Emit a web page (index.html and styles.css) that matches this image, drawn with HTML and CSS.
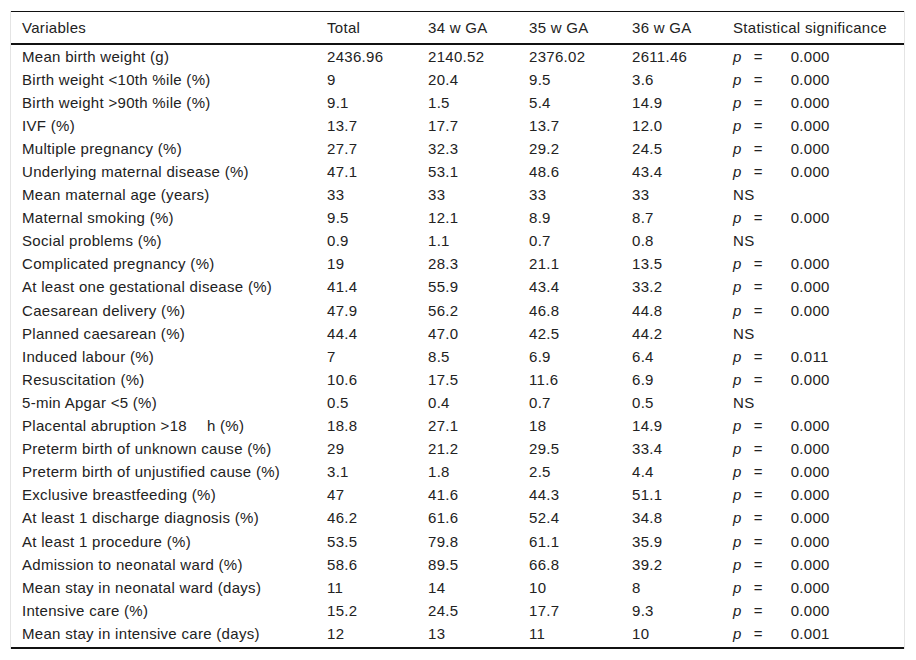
FILE: index.html
```html
<!DOCTYPE html>
<html lang="en">
<head>
<meta charset="utf-8">
<title>Table</title>
<link rel="stylesheet" href="styles.css">
</head>
<body>
<div class="wrap">
<table class="data">
<colgroup>
<col class="c1"><col class="c2"><col class="c3"><col class="c4"><col class="c5"><col class="c6">
</colgroup>
<thead>
<tr><th>Variables</th><th>Total</th><th>34 w GA</th><th>35 w GA</th><th>36 w GA</th><th>Statistical significance</th></tr>
</thead>
<tbody>
<tr><td>Mean birth weight (g)</td><td>2436.96</td><td>2140.52</td><td>2376.02</td><td>2611.46</td><td><i>p</i><span class="eq">=</span>0.000</td></tr>
<tr><td>Birth weight &lt;10th %ile (%)</td><td>9</td><td>20.4</td><td>9.5</td><td>3.6</td><td><i>p</i><span class="eq">=</span>0.000</td></tr>
<tr><td>Birth weight &gt;90th %ile (%)</td><td>9.1</td><td>1.5</td><td>5.4</td><td>14.9</td><td><i>p</i><span class="eq">=</span>0.000</td></tr>
<tr><td>IVF (%)</td><td>13.7</td><td>17.7</td><td>13.7</td><td>12.0</td><td><i>p</i><span class="eq">=</span>0.000</td></tr>
<tr><td>Multiple pregnancy (%)</td><td>27.7</td><td>32.3</td><td>29.2</td><td>24.5</td><td><i>p</i><span class="eq">=</span>0.000</td></tr>
<tr><td>Underlying maternal disease (%)</td><td>47.1</td><td>53.1</td><td>48.6</td><td>43.4</td><td><i>p</i><span class="eq">=</span>0.000</td></tr>
<tr><td>Mean maternal age (years)</td><td>33</td><td>33</td><td>33</td><td>33</td><td>NS</td></tr>
<tr><td>Maternal smoking (%)</td><td>9.5</td><td>12.1</td><td>8.9</td><td>8.7</td><td><i>p</i><span class="eq">=</span>0.000</td></tr>
<tr><td>Social problems (%)</td><td>0.9</td><td>1.1</td><td>0.7</td><td>0.8</td><td>NS</td></tr>
<tr><td>Complicated pregnancy (%)</td><td>19</td><td>28.3</td><td>21.1</td><td>13.5</td><td><i>p</i><span class="eq">=</span>0.000</td></tr>
<tr><td>At least one gestational disease (%)</td><td>41.4</td><td>55.9</td><td>43.4</td><td>33.2</td><td><i>p</i><span class="eq">=</span>0.000</td></tr>
<tr><td>Caesarean delivery (%)</td><td>47.9</td><td>56.2</td><td>46.8</td><td>44.8</td><td><i>p</i><span class="eq">=</span>0.000</td></tr>
<tr><td>Planned caesarean (%)</td><td>44.4</td><td>47.0</td><td>42.5</td><td>44.2</td><td>NS</td></tr>
<tr><td>Induced labour (%)</td><td>7</td><td>8.5</td><td>6.9</td><td>6.4</td><td><i>p</i><span class="eq">=</span>0.011</td></tr>
<tr><td>Resuscitation (%)</td><td>10.6</td><td>17.5</td><td>11.6</td><td>6.9</td><td><i>p</i><span class="eq">=</span>0.000</td></tr>
<tr><td>5-min Apgar &lt;5 (%)</td><td>0.5</td><td>0.4</td><td>0.7</td><td>0.5</td><td>NS</td></tr>
<tr><td>Placental abruption &gt;18<span class="gap"></span>h (%)</td><td>18.8</td><td>27.1</td><td>18</td><td>14.9</td><td><i>p</i><span class="eq">=</span>0.000</td></tr>
<tr><td>Preterm birth of unknown cause (%)</td><td>29</td><td>21.2</td><td>29.5</td><td>33.4</td><td><i>p</i><span class="eq">=</span>0.000</td></tr>
<tr><td>Preterm birth of unjustified cause (%)</td><td>3.1</td><td>1.8</td><td>2.5</td><td>4.4</td><td><i>p</i><span class="eq">=</span>0.000</td></tr>
<tr><td>Exclusive breastfeeding (%)</td><td>47</td><td>41.6</td><td>44.3</td><td>51.1</td><td><i>p</i><span class="eq">=</span>0.000</td></tr>
<tr><td>At least 1 discharge diagnosis (%)</td><td>46.2</td><td>61.6</td><td>52.4</td><td>34.8</td><td><i>p</i><span class="eq">=</span>0.000</td></tr>
<tr><td>At least 1 procedure (%)</td><td>53.5</td><td>79.8</td><td>61.1</td><td>35.9</td><td><i>p</i><span class="eq">=</span>0.000</td></tr>
<tr><td>Admission to neonatal ward (%)</td><td>58.6</td><td>89.5</td><td>66.8</td><td>39.2</td><td><i>p</i><span class="eq">=</span>0.000</td></tr>
<tr><td>Mean stay in neonatal ward (days)</td><td>11</td><td>14</td><td>10</td><td>8</td><td><i>p</i><span class="eq">=</span>0.000</td></tr>
<tr><td>Intensive care (%)</td><td>15.2</td><td>24.5</td><td>17.7</td><td>9.3</td><td><i>p</i><span class="eq">=</span>0.000</td></tr>
<tr class="last"><td>Mean stay in intensive care (days)</td><td>12</td><td>13</td><td>11</td><td>10</td><td><i>p</i><span class="eq">=</span>0.001</td></tr>
</tbody>
</table>
</div>
</body>
</html>
```
FILE: styles.css
```css
html, body {
  margin: 0;
  padding: 0;
  background: #fff;
}

body {
  font-family: "Liberation Sans", Arial, sans-serif;
  font-size: 15px;
  letter-spacing: 0.3px;
  color: #222;
}

.wrap {
  margin: 11px 0 0 10px;
  width: 893px;
  border-left: 1px solid #e4e4e4;
  border-right: 1px solid #e4e4e4;
}

.data {
  width: 100%;
  border-collapse: collapse;
  table-layout: fixed;
  border-top: 1px solid #111;
  border-bottom: 2px solid #111;
}

.c1 { width: 305px; }
.c2 { width: 101px; }
.c3 { width: 101px; }
.c4 { width: 103px; }
.c5 { width: 101px; }
.c6 { width: auto; }

.data th {
  font-weight: normal;
  text-align: left;
  line-height: 16px;
  padding: 7.5px 0 7.5px 11px;
  border-bottom: 2px solid #111;
  white-space: nowrap;
}

.data td {
  text-align: left;
  line-height: 16px;
  padding: 3.55px 0 3.55px 11px;
  white-space: nowrap;
}

.data .last td {
  padding-bottom: 5.5px;
}

.data i {
  font-style: italic;
}

.eq {
  display: inline-block;
  margin: 0 28px 0 12px;
}

.gap {
  display: inline-block;
  width: 20px;
}
```
